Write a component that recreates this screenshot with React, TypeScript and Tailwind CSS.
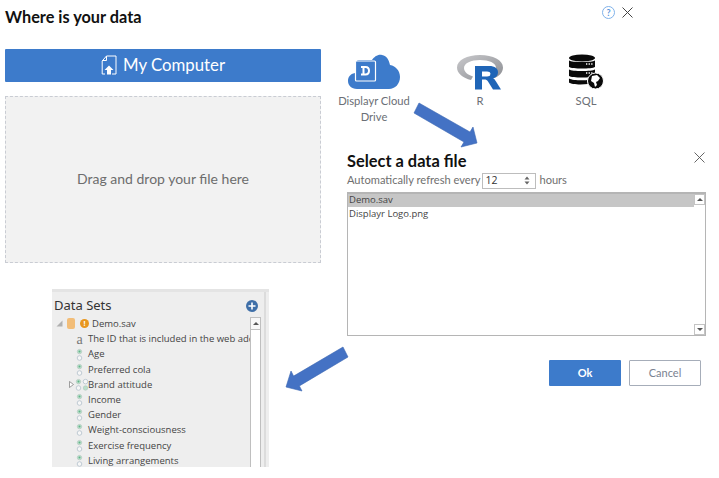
const rows = ["The ID that is included in the web address","Age","Preferred cola","Brand attitude","Income","Gender","Weight-consciousness","Exercise frequency","Living arrangements"];

function Radio() {
  return (
    <svg width="7" height="14" viewBox="0 0 7 14" className="shrink-0">
      <circle cx="3.5" cy="3.6" r="2.2" fill="#b9e0cb" stroke="#b4c8be" strokeWidth="0.7" />
      <circle cx="3.5" cy="3.6" r="1" fill="#62b288" />
      <circle cx="3.5" cy="10" r="2.3" fill="#f7f7f7" stroke="#b3c0cb" strokeWidth="0.8" />
    </svg>
  );
}

function MultiRadio() {
  return (
    <svg width="14" height="14" viewBox="0 0 14 14" className="shrink-0">
      <circle cx="3.5" cy="3.6" r="2.2" fill="#b9e0cb" stroke="#b4c8be" strokeWidth="0.7" />
      <circle cx="3.5" cy="3.6" r="1" fill="#62b288" />
      <circle cx="3.5" cy="10" r="2.3" fill="#f7f7f7" stroke="#b3c0cb" strokeWidth="0.8" />
      <circle cx="10.5" cy="3.6" r="2.3" fill="#f7f7f7" stroke="#b3c0cb" strokeWidth="0.8" />
      <circle cx="10.5" cy="10" r="2.2" fill="#b9e0cb" stroke="#b4c8be" strokeWidth="0.7" />
    </svg>
  );
}

function Arrow({ className, points }: { className: string; points: string }) {
  return (
    <svg className={className} viewBox="0 0 70 50">
      <polygon points={points} fill="#4472c4" stroke="#3a66b2" strokeWidth="0.6" />
    </svg>
  );
}

function Source({ icon, label }: { icon: React.ReactNode; label: React.ReactNode }) {
  return (
    <div className="flex flex-col items-center w-[90px]">
      <div className="h-[40px] flex items-end justify-center">{icon}</div>
      <div className="mt-[3px] text-center text-[11.2px] leading-[16px] text-[#6b6f76]">{label}</div>
    </div>
  );
}

export default function App() {
  return (
    <div className="relative w-[719px] h-[478px] bg-white overflow-hidden flex font-['Lato',sans-serif]">
      {/* left column */}
      <div className="w-[316px] ml-[5px] shrink-0 flex flex-col">
        <h1 className="mt-[6px] h-[21px] text-[16.3px] leading-[21px] font-bold text-[#111]">Where is your data</h1>
        <button className="mt-[22px] h-[33px] bg-[#3d7bcb] rounded-[1px] flex items-center justify-center gap-[6px] pb-[2px] text-white text-[16.8px]">
          <svg width="16" height="20" viewBox="0 0 16 20" fill="none">
            <path d="M5.500 1H15v18H11M4 19H1.200V6L5.500 1V5.500H1.500" stroke="#fff" strokeWidth="1" />
            <path d="M8 10.500l4.500 4.500H10v4.500H6V15H3.500z" fill="#fff" />
          </svg>
          My Computer
        </button>
        <div className="mt-[14px] h-[167px] bg-[#f2f2f2] border border-dashed border-[#c9ccd3] flex items-center justify-center pb-[2px] text-[14px] text-[#6d6d6d]">
          Drag and drop your file here
        </div>
        {/* Data sets panel */}
        <div className="mt-[26px] ml-[47px] w-[217px] h-[178px] bg-[#eeeeee] border-t-[3px] border-[#e4e4e4] flex font-['Open_Sans',sans-serif] overflow-hidden">
          <div className="w-[198px] pl-[2px] shrink-0 flex flex-col">
            <div className="h-[25px] flex items-center text-[13px] text-[#333] font-['Noto_Sans',sans-serif] pt-[4px]">
              Data Sets
            </div>
            <div className="flex items-center h-[15px] text-[9.5px] text-[#444] mt-[1px] pl-[2px]">
              <svg width="7" height="7" viewBox="0 0 7 7" className="mr-[4px] shrink-0"><path d="M6.500 0.500V6.500H0.500z" fill="#b0b0b0" /></svg>
              <div className="w-[8px] h-[11px] rounded-[2px] bg-[#f2bd78] mr-[5px] shrink-0" />
              <div className="w-[9px] h-[9px] rounded-full bg-[#e8961e] mr-[3px] shrink-0 text-white text-[7px] leading-[9px] text-center font-bold">!</div>
              Demo.sav
            </div>
            <div className="flex flex-col mt-[1px]">
              {rows.map((r, i) => (
                <div key={r} className="h-[15.2px] flex items-center text-[9.5px] text-[#444] whitespace-nowrap overflow-hidden">
                  {i === 3 ? (
                    <>
                      <svg width="5" height="7" viewBox="0 0 5 7" className="ml-[15px] mr-[1px] shrink-0"><path d="M0.500 0.500L4.500 3.500L0.500 6.500z" fill="#fff" stroke="#777" strokeWidth="0.7" /></svg>
                      <MultiRadio />
                      <span className="ml-[-1px]">{r}</span>
                    </>
                  ) : (
                    <>
                      <span className="w-[7px] ml-[22px] shrink-0 flex justify-center">
                        {i === 0 ? <span className="font-['Liberation_Serif',serif] text-[14px] leading-[13px] text-[#777]">a</span> : <Radio />}
                      </span>
                      <span className="ml-[5px]">{r}</span>
                    </>
                  )}
                </div>
              ))}
            </div>
          </div>
          <div className="w-[11px] mt-[25px] shrink-0 bg-white border border-[#bfbfbf] h-[160px] flex flex-col">
            <div className="h-[12px] border-b border-[#bfbfbf] bg-[#f7f7f7] flex items-center justify-center">
              <div className="w-0 h-0 border-x-[3px] border-x-transparent border-b-[3px] border-b-[#555]" />
            </div>
          </div>
          <div className="w-[3px] shrink-0" />
          <div className="w-[2px] shrink-0 bg-[#dcdcdc]" />
        </div>
      </div>

      {/* right column */}
      <div className="flex-1 ml-[26px] flex flex-col relative">
        <div className="flex items-center justify-end h-[24px] pr-[86px] gap-[7px]">
          <div className="w-[13px] h-[13px] rounded-full border border-[#7fb2ea] text-[#5c97dc] text-[9px] leading-[11px] text-center font-bold">?</div>
          <svg width="11" height="11" viewBox="0 0 11 11"><path d="M0.500 0.500l10 10M10.500 0.500l-10 10" stroke="#444" strokeWidth="1" /></svg>
        </div>
        <div className="flex mt-[26px] -ml-[18px]">
          <Source label={<>Displayr Cloud<br />Drive</>} icon={
            <svg width="52" height="36" viewBox="0 0 52 36">
              <path d="M9 35C3 35 0 31 0 27c0-4 2-7 7-8V11C7 8 9 6 11 6h13c2-3 6-6 10-5 5 1 7 5 8 10 6 1 10 6 10 12 0 7-5 12-11 12z" fill="#3d7bcb" />
              <rect x="7.500" y="7" width="20" height="20" rx="1" fill="#3d7bcb" stroke="#fff" strokeWidth="1.200" />
              <path d="M13 12h4.500c3 0 4.500 2 4.500 4.700S20.500 21.500 17.500 21.500H13v-2h1.500v-5.500H13zM16.500 14v5.500h1c1.500 0 2.500-1 2.500-2.800S19 14 17.500 14z" fill="#fff" />
            </svg>
          } />
          <div className="w-[16px]" />
          <Source label="R" icon={
            <svg width="46" height="35" viewBox="0 0 46 35">
              <defs>
                <linearGradient id="rg" x1="0" y1="0" x2="1" y2="1"><stop offset="0" stopColor="#c9c9cc" /><stop offset="1" stopColor="#8b8d92" /></linearGradient>
              </defs>
              <path fillRule="evenodd" d="M23 0c13 0 23 5 23 12.500 0 5-4 9-10 11l-3-4c4-1.500 6-4 6-7 0-4.500-7-7.500-16-7.500S7 8 7 13c0 4 4 7 9 8.500l-2 3.500C6 23 0 18.500 0 12.500 0 5 10 0 23 0z" fill="url(#rg)" />
              <path fillRule="evenodd" d="M18 11h14c6 0 9 2.500 9 6.500 0 3-2 5-5 5.800 1.500.7 2 1.700 3 3.200l5 8h-8l-5-8c-1-1.500-2-2-3.500-2H25v10h-7zM25 16.500v5h5c2 0 3.500-.8 3.500-2.500s-1.500-2.500-3.500-2.500z" fill="#1f65b7" />
            </svg>
          } />
          <div className="w-[16px]" />
          <Source label="SQL" icon={
            <svg width="35" height="36" viewBox="0 0 35 36">
              <ellipse cx="13" cy="4" rx="13" ry="3.500" fill="#0a0a0a" />
              <path d="M0 6.500c3 2 23 2 26 0V13c-3 2-23 2-26 0z" fill="#0a0a0a" />
              <path d="M0 15.500c3 2 23 2 26 0V22c-3 2-23 2-26 0z" fill="#0a0a0a" />
              <path d="M0 24.500c3 2 14 2.200 18 1.500l1 4c-7 1-17 .5-19-1.500z" fill="#0a0a0a" />
              <path d="M17 10h7M17 19h7" stroke="#fff" strokeWidth="1.300" strokeDasharray="1.300 1.300" />
              <circle cx="26.500" cy="27" r="8" fill="#0a0a0a" stroke="#fff" strokeWidth="1" />
              <path d="M23 22l5-1 3 3-2 3-2 1 1 3-2 2-1-4-3-2z" fill="#fff" />
            </svg>
          } />
        </div>

        {/* select dialog */}
        <div className="absolute left-[0px] top-[151px] w-[359px]">
          <div className="flex items-start justify-between">
            <h2 className="text-[16.4px] leading-[20px] font-bold text-[#111]">Select a data file</h2>
            <svg width="11" height="11" viewBox="0 0 11 11" className="mr-[1px] mt-[1px]"><path d="M0.500 0.500l10 10M10.500 0.500l-10 10" stroke="#555" strokeWidth="0.9" /></svg>
          </div>
          <div className="flex items-center h-[17px] mt-[1px] text-[11.1px] text-[#6f6f6f]">
            <span>Automatically refresh every</span>
            <div className="ml-[2px] w-[54px] h-[16px] border border-[#bdbdbd] flex items-center justify-between pl-[2px] pr-[5px] text-[10.5px] text-[#333] font-['Open_Sans',sans-serif]">
              12
              <svg width="6" height="9" viewBox="0 0 6 9"><path d="M3 0.500L5.500 3.500H0.500zM3 8.500L0.500 5.500H5.500z" fill="#666" /></svg>
            </div>
            <span className="ml-[3px]">hours</span>
          </div>
          <div className="mt-[3px] h-[144px] border border-[#b5b5b5] border-t-2 flex font-['Open_Sans',sans-serif] text-[9.5px] text-[#444] w-[359px]">
            <div className="flex-1 flex flex-col">
              <div className="h-[13px] bg-[#c6c6c6] px-[1px] leading-[12px]">Demo.sav</div>
              <div className="h-[14px] px-[1px] leading-[14px]">Displayr Logo.png</div>
            </div>
            <div className="w-[11px] flex flex-col justify-between">
              <div className="h-[11px] border border-[#c4c4c4] flex items-center justify-center"><div className="w-0 h-0 border-x-[3px] border-x-transparent border-b-[3px] border-b-[#555]" /></div>
              <div className="h-[11px] border border-[#c4c4c4] flex items-center justify-center"><div className="w-0 h-0 border-x-[3px] border-x-transparent border-t-[3px] border-t-[#555]" /></div>
            </div>
          </div>
          <div className="flex justify-end gap-[8px] mt-[24px] pr-[5px] text-[11px]">
            <button className="w-[72px] h-[26px] bg-[#3d7bcb] rounded-[1px] text-white font-bold">Ok</button>
            <button className="w-[72px] h-[26px] border border-[#a6adb9] rounded-[1px] text-[#7a8291]">Cancel</button>
          </div>
        </div>
      </div>

      {/* plus button */}
      <div className="absolute left-[246px] top-[300px] w-[12px] h-[12px] rounded-full bg-[#3f6fa8] text-white flex items-center justify-center">
        <svg width="8" height="8" viewBox="0 0 8 8"><path d="M4 0.500v7M0.500 4h7" stroke="#fff" strokeWidth="1.600" /></svg>
      </div>

      {/* annotation arrows */}
      <Arrow className="absolute left-[410px] top-[100px] w-[70px] h-[50px]" points="9,3 4,13 54,42 51,47 67,43 63,27 60,32" />
      <Arrow className="absolute left-[282px] top-[344px] w-[70px] h-[50px]" points="61,3 66,13 17.4,41.9 20,47 4,43 9,27 11.6,32.1" />
    </div>
  );
}
